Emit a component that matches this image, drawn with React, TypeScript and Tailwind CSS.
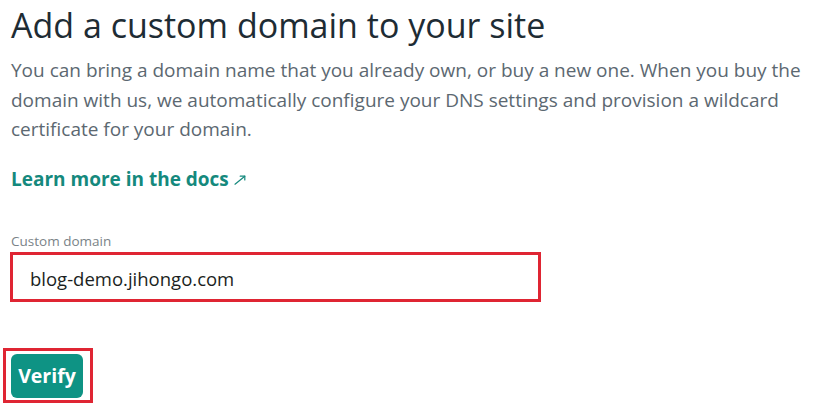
import React, { useState } from 'react';

const ArrowUpRight = () => (
    <svg width="12" height="10" viewBox="0 0 12 10" fill="none" stroke="currentColor" strokeWidth="1.2" strokeLinecap="round" strokeLinejoin="round">
        <path d="M1 9.2L10.8 1.2" />
        <path d="M6.2 1.2H10.8V5" />
    </svg>
);

export default function App() {
    const [domain, setDomain] = useState('blog-demo.jihongo.com');

    return (
        <div className="min-h-screen bg-white pl-[11px] pt-[5px] font-['Open_Sans',sans-serif]">
            <h1 className="text-[34px] leading-[40px] font-normal text-[#1e2c34]">
                Add a custom domain to your site
            </h1>
            <p className="mt-[11px] w-[800px] text-[19px] leading-[29.5px] text-[#5c6871]">
                You can bring a domain name that you already own, or buy a new one. When you buy the domain with us, we
                automatically configure your DNS settings and provision a wildcard certificate for your domain.
            </p>

            <a href="#" className="mt-[20px] flex items-center gap-[5px] text-[19px] leading-[29.5px] font-bold text-[#15897d]">
                Learn more in the docs
                <span className="mt-[2px]">
                    <ArrowUpRight />
                </span>
            </a>

            <form className="mt-[38px]" onSubmit={(e) => e.preventDefault()}>
                <label className="block text-[13.5px] leading-[18px] text-[#7a8388]">Custom domain</label>
                <input
                    type="text"
                    value={domain}
                    onChange={(e) => setDomain(e.target.value)}
                    className="mt-[2px] -ml-[1px] block h-[50px] w-[531px] border-[3px] border-[#df2533] bg-white pl-[17px] pt-[2px] text-[18.5px] text-[#1b1f22] outline-none"
                />

                <div className="mt-[46px] -ml-[8px] inline-block border-[3px] border-[#df2533] pl-[5px] pr-[7px] pt-[3px] pb-[2px]">
                    <button
                        type="submit"
                        className="block h-[44px] w-[72px] rounded-[6px] bg-[#0e9384] text-[19.5px] font-bold text-white"
                    >
                        Verify
                    </button>
                </div>
            </form>
        </div>
    );
}
